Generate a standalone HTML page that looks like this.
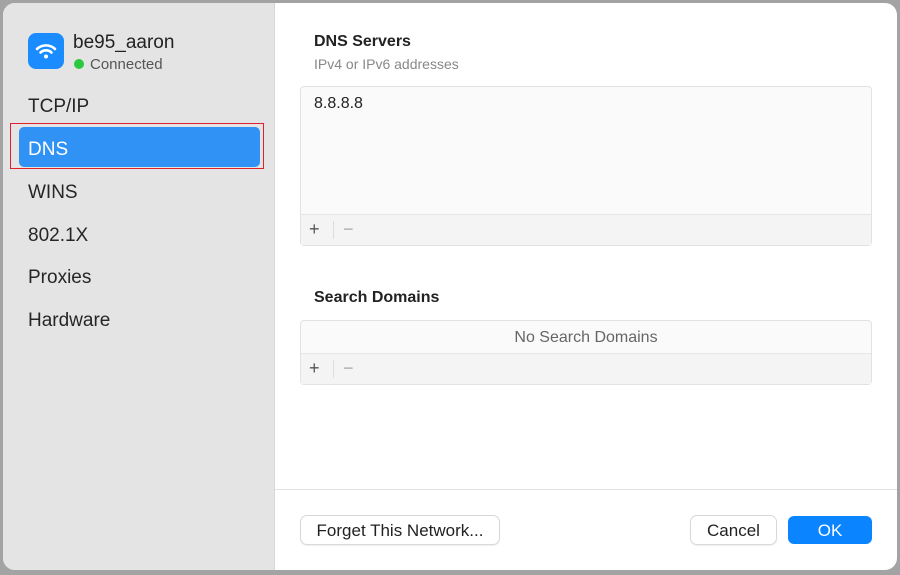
<!DOCTYPE html>
<html><head><style>
body{margin:0;width:900px;height:575px;background:#a3a3a3;font-family:"Liberation Sans",sans-serif;position:relative;overflow:hidden}
.win{position:absolute;left:3px;top:3px;width:894px;height:567px;border-radius:12px;background:#fff;overflow:hidden}
.side{position:absolute;left:0;top:0;width:271px;height:567px;background:#e4e4e4;border-right:1px solid #d6d6d6}
.abs{position:absolute}
.item{position:absolute;left:25px;font-size:19px;color:#262626}
.box{position:absolute;left:297px;width:570px;border:1px solid #e2e2e2;border-radius:4px;background:#fafafa}
.bar{position:absolute;left:0;right:0;height:30px;background:#f4f4f4;border-top:1px solid #e6e6e6;font-size:18px;color:#555}
.btn{position:absolute;top:513px;height:28px;border-radius:6px;background:#fff;box-shadow:0 0 0 1px #d8d8d8,0 1px 2px rgba(0,0,0,.15);font-size:17px;color:#222;text-align:center;line-height:29px}
</style></head><body>
<div class="win">
<div class="side">
<div class="abs" style="left:25px;top:30px;width:36px;height:36px;border-radius:8px;background:#1a8cff">
<svg width="36" height="36" viewBox="0 0 36 36"><g fill="none" stroke="#fff" stroke-width="2.6" stroke-linecap="round"><path d="M9 16a13 13 0 0 1 18 0"/><path d="M12.5 19.5a8 8 0 0 1 11 0"/></g><circle cx="18" cy="23.5" r="2" fill="#fff"/></svg></div>
<div class="abs" style="left:70px;top:29px;font-size:19px;color:#222">be95_aaron</div>
<div class="abs" style="left:71px;top:56px;width:10px;height:10px;border-radius:50%;background:#2bc840"></div>
<div class="abs" style="left:87px;top:53px;font-size:15px;color:#555">Connected</div>
<div class="item" style="top:93px">TCP/IP</div>
<div class="abs" style="left:7px;top:120px;width:252px;height:44px;border:1.5px solid #e0202a"></div>
<div class="abs" style="left:16px;top:124px;width:241px;height:40px;border-radius:5px;background:#3092f5"></div>
<div class="item" style="top:136px;color:#fff">DNS</div>
<div class="item" style="top:179px">WINS</div>
<div class="item" style="top:222px">802.1X</div>
<div class="item" style="top:264px">Proxies</div>
<div class="item" style="top:307px">Hardware</div>
</div>
<div class="abs" style="left:311px;top:30px;font-size:16px;font-weight:bold;color:#222">DNS Servers</div>
<div class="abs" style="left:311px;top:53px;font-size:14px;color:#888">IPv4 or IPv6 addresses</div>
<div class="box" style="top:83px;height:158px">
<div class="abs" style="left:13px;top:8px;font-size:16px;color:#222">8.8.8.8</div>
<div class="bar" style="top:127px"><span class="abs" style="left:8px;top:4px">+</span><span class="abs" style="left:32px;top:6px;width:1px;height:18px;background:#ddd"></span><span class="abs" style="left:42px;top:4px;color:#aaa">−</span></div>
</div>
<div class="abs" style="left:311px;top:286px;font-size:16px;font-weight:bold;color:#222">Search Domains</div>
<div class="box" style="top:317px;height:63px">
<div class="abs" style="left:0;right:0;top:8px;text-align:center;font-size:16px;color:#666">No Search Domains</div>
<div class="bar" style="top:32px"><span class="abs" style="left:8px;top:4px">+</span><span class="abs" style="left:32px;top:6px;width:1px;height:18px;background:#ddd"></span><span class="abs" style="left:42px;top:4px;color:#aaa">−</span></div>
</div>
<div class="abs" style="left:272px;top:486px;width:622px;height:1px;background:#e2e2e2"></div>
<div class="btn" style="left:298px;width:198px">Forget This Network...</div>
<div class="btn" style="left:688px;width:85px">Cancel</div>
<div class="btn" style="left:785px;width:84px;background:#0a84ff;color:#fff;box-shadow:none">OK</div>
</div>
</body></html>
